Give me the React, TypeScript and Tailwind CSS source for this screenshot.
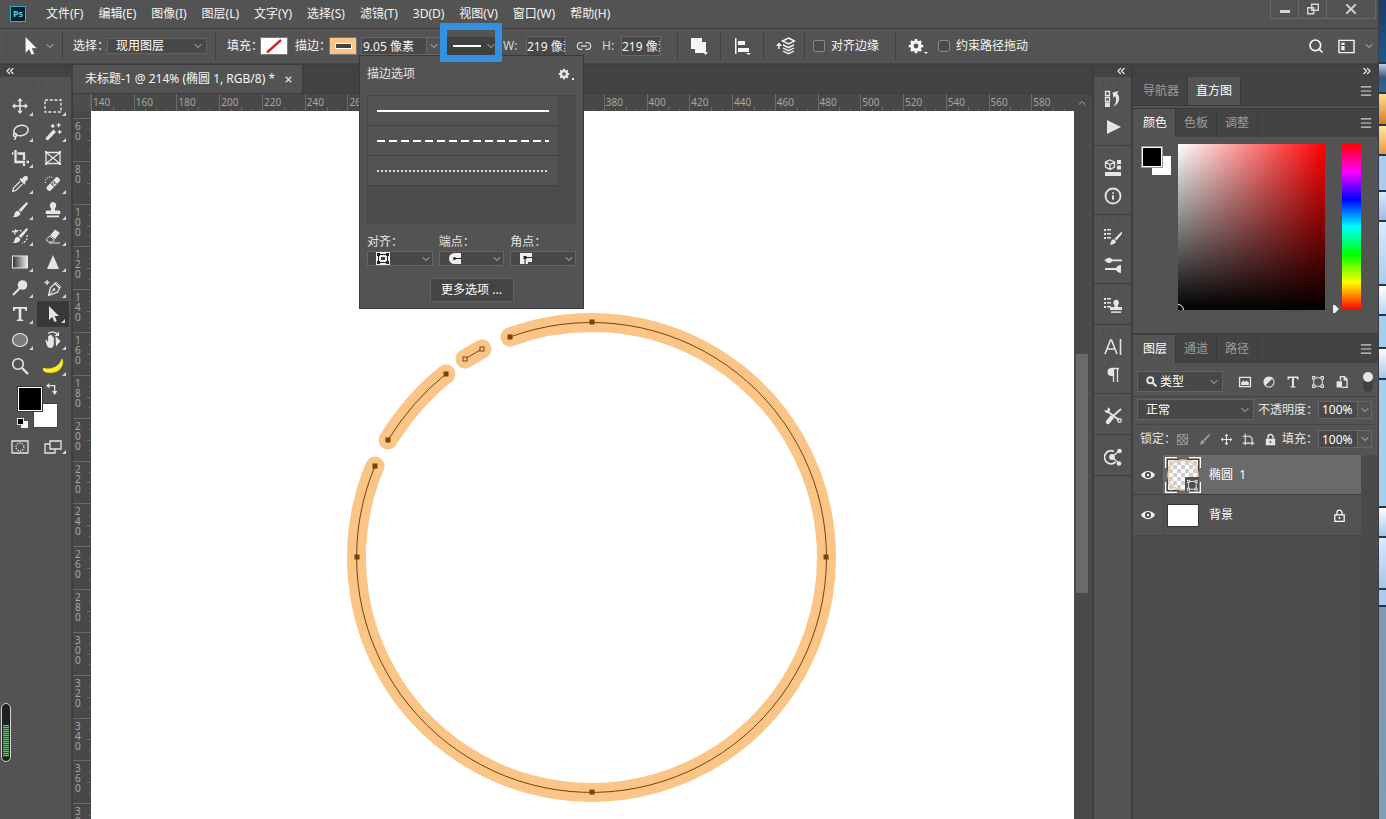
import { ReactNode } from 'react';
import { ChevronDown, ChevronUp, ChevronsLeft, ChevronsRight, Link2, Menu, Search, Info } from 'lucide-react';

const menus = ['文件(F)', '编辑(E)', '图像(I)', '图层(L)', '文字(Y)', '选择(S)', '滤镜(T)', '3D(D)', '视图(V)', '窗口(W)', '帮助(H)'];

const rulerX = Array.from({ length: 23 }, (_, i) => 140 + i * 20);
const rulerY = Array.from({ length: 17 }, (_, i) => 60 + i * 20);

// anchor points of the open path, in canvas pixels
const anchors = [[419, 226], [355, 263], [297, 329], [284, 355], [266, 446], [501, 681], [735, 446], [501, 211]];
const openAnchors = [[391, 238], [374, 248]];

const Icon = ({ children, className = 'size-[18px]' }: { children: ReactNode; className?: string }) => (
  <svg viewBox="0 0 18 18" className={`shrink-0 ${className}`} fill="currentColor" aria-hidden="true">
    {children}
  </svg>
);

const line = { fill: 'none', stroke: 'currentColor', strokeWidth: 1.3 };

const moveShape = <path d="M9 1l2.7 3.2H9.8v4h4V6.3L17 9l-3.2 2.7V9.8h-4v4h1.9L9 17l-2.7-3.2h1.9v-4h-4v1.9L1 9l3.2-2.7v1.9h4v-4H6.3z" />;
const brushShape = (
  <>
    <path d="M16.5 1.5c.6.5.3 1.2-.2 1.9L10 11 7.6 9l7-7c.7-.7 1.4-1 1.9-.5z" />
    <path d="M6.9 9.7l2.4 2.1c.2 2.7-2.3 4.7-7.8 4.2 2-.8 1.7-2 2.2-3.8.5-1.6 1.7-2.5 3.2-2.5z" />
  </>
);
const stampShape = (
  <>
    <path d="M9 1a3.3 3.3 0 0 1 2.8 5C10.8 7.5 10.8 8.5 11 9.5h4c.8 0 1.3.6 1.3 1.3V13H1.7v-2.2c0-.7.5-1.3 1.3-1.3h4c.2-1 .2-2-.8-3.500A3.3 3.3 0 0 1 9 1z" />
    <rect x="3" y="14.5" width="12" height="1.8" />
  </>
);
const gearShape = (
  <path
    fillRule="evenodd"
    d="M7.7 1h2.6l.4 2 1.4.6 1.7-1.1 1.8 1.8-1.1 1.7.6 1.4 2 .4v2.5l-2 .4-.6 1.4 1.1 1.7-1.8 1.8-1.7-1.1-1.4.6-.4 2H7.7l-.4-2-1.4-.6-1.7 1.1-1.8-1.8 1.1-1.7-.6-1.4-2-.4V7.8l2-.4.6-1.4-1.1-1.7 1.8-1.8 1.7 1.1L7.3 3zM9 6.3a2.7 2.7 0 1 0 0 5.4 2.7 2.7 0 0 0 0-5.4z"
  />
);
const typeShape = <path d="M2 2h14v4h-1.4c-.3-1.7-.9-2.3-2.5-2.3h-1.8v9.8c0 1 .4 1.3 2 1.4V16H5.7v-1.1c1.6-.1 2-.4 2-1.4V3.7H5.9C4.3 3.7 3.7 4.3 3.4 6H2z" />;
const pathBoxShape = (
  <g {...line}>
    <path d="M5 3.5h8M5 14.5h8M3.5 5v8M14.5 5v8" />
    <path d="M2 2h3v3H2zM13 2h3v3h-3zM2 13h3v3H2zM13 13h3v3h-3z" />
  </g>
);
const arrowShape = <path d="M5 1v14l3.3-3.1 2.2 5 2.3-1-2.2-4.900H15z" />;

const tools: { label: string; corner?: boolean; active?: boolean; art: ReactNode }[] = [
  { label: '移动工具', corner: true, art: moveShape },
  { label: '矩形选框工具', corner: true, art: <rect x="1" y="3" width="16" height="12" {...line} strokeDasharray="3 1.7" /> },
  {
    label: '套索工具', corner: true,
    art: <g {...line} strokeWidth="1.5"><ellipse cx="10" cy="7.5" rx="7.2" ry="5.2" transform="rotate(-12 10 7.5)" /><circle cx="4" cy="12" r="1.6" /><path d="M4.5 13.5c.5 1.5-.3 2.7-1.5 3" /></g>,
  },
  {
    label: '魔棒工具', corner: true,
    art: <><path d="M2 14.5L9.5 6.5 12 9 4.5 16.8c-1.5 1.3-3.800-.7-2.500-2.300z" /><path d="M8 1h1.4v1.3h1.3v1.4H9.4V5H8V3.7H6.7V2.3H8zM14 0h1.3v1.5h1.4v1.3h-1.4v1.4H14V2.8h-1.4V1.5H14zM15 7h1.3v1.3h1.4v1.3h-1.4V11H15V9.6h-1.3V8.3H15z" /></>,
  },
  { label: '裁剪工具', corner: true, art: <path d="M4.5 1v12H14M1 4.5h1.5M6.5 4.5H13V11M13 14.5V17M15.5 13H18" {...line} strokeWidth="2.3" /> },
  { label: '图框工具', art: <g {...line}><path d="M2 3.5h14v11H2zM2 3.5l14 11M16 3.5l-14 11" /><path d="M1 2h2v2H1zM15 2h2v2h-2zM1 14h2v2H1zM15 14h2v2h-2z" fill="currentColor" stroke="none" /></g> },
  {
    label: '吸管工具', corner: true,
    art: <><path d="M13 1.5c1-1 2.5-.9 3.3 0s1 2.3 0 3.3L13.9 7l.8.9-1.5 1.5-4.8-4.8L9.9 3.1l.9.9z" /><path d="M9 6.5l-6.5 6.6-.8 3.3 3.2-.9 6.6-6.600" {...line} /></>,
  },
  {
    label: '修复画笔工具', corner: true,
    art: <><path d="M12 2.2c1.3-1.3 5 2.3 3.8 3.7L6.5 15.7c-1.5 1.4-5.2-2.2-3.8-3.7z" /><path d="M6.5 8l3.7 3.8M9 5.4l3.7 3.8" stroke="#535353" strokeWidth="1" /><g fill="#535353"><circle cx="8.5" cy="9" r=".7" /><circle cx="10.5" cy="8.8" r=".7" /><circle cx="9" cy="7.3" r=".7" /></g><path d="M1.5 8c-1-4 3-7.500 7-5.500" {...line} strokeDasharray="1 1.5" /></>,
  },
  { label: '画笔工具', corner: true, art: brushShape },
  { label: '仿制图章工具', corner: true, art: stampShape },
  {
    label: '历史记录画笔工具', corner: true,
    art: <>{brushShape}<path d="M1 4.5h4.5L4 2.5M3 4.5l1.5 3" {...line} /><path d="M5.5 4c2-1 4-.8 5 .5M16 8c.8 4-1 7-5 8" {...line} strokeDasharray="2 1.3" /></>,
  },
  {
    label: '橡皮擦工具', corner: true,
    art: <><path d="M11 2.5l4.8 3.6-4.7 6L6.2 8.4z" /><path d="M5.7 9l4.7 3.8-1.9 2.200H4.700L2 12.800z" fill="none" stroke="currentColor" /><path d="M5 16h11" {...line} strokeWidth="1" /></>,
  },
  { label: '渐变工具', corner: true, art: <><defs><linearGradient id="gradTool"><stop offset="0" stopColor="#303030" /><stop offset="1" stopColor="#eee" /></linearGradient></defs><rect x="1.5" y="3" width="15" height="12" fill="url(#gradTool)" stroke="currentColor" /></> },
  { label: '锐化工具', corner: true, art: <path d="M9 2l6 14H3z" /> },
  { label: '减淡工具', corner: true, art: <><circle cx="11.5" cy="6" r="4.8" /><path d="M8.5 9.5L2 16" stroke="currentColor" strokeWidth="2" /></> },
  {
    label: '钢笔工具', corner: true,
    art: <><path d="M11 4.5l4.5 4.5-2 4.2-9 3.3 2-8z" {...line} /><path d="M12 3.2l4.8 4.7-1.2 1.2-4.8-4.7zM5 16l4.5-5" {...line} strokeWidth="1" /><circle cx="10" cy="10.5" r="1.3" /><path d="M3 1v5M.5 3.5h5" {...line} /></>,
  },
  { label: '文字工具', corner: true, art: typeShape },
  { label: '直接选择工具', corner: true, active: true, art: arrowShape },
  { label: '椭圆工具', corner: true, art: <ellipse cx="9" cy="9" rx="7.5" ry="6.5" fill="#7c7c7c" stroke="currentColor" strokeWidth="1.2" /> },
  {
    label: '旋转视图工具', corner: true,
    art: <><path d="M1.5 9.5c0-1 1.2-1 1.6 0l1 2V5.500c0-1 1.400-1 1.400 0v3V4.300c0-1 1.500-1 1.500 0v4V5c0-1 1.500-1 1.500 0v3.500V6.500c0-.8 1.300-.8 1.300 0v6c0 3-1.500 4.500-3.600 4.500-2.700 0-3.700-3-4.700-7.500z" /><path d="M11.5 5l5 5-4.5 5.5z" /><path d="M4 2.5c3-2 7-1.7 9 .3" {...line} /><path d="M15 .5v4.500h-4.500z" /></>,
  },
  { label: '缩放工具', art: <><circle cx="7" cy="7" r="5.3" {...line} strokeWidth="1.6" /><path d="M11 11l6 6" stroke="currentColor" strokeWidth="2.4" /></> },
  { label: '香蕉', corner: true, art: null },
];

const Chevron = () => <ChevronDown className="size-3 shrink-0 text-neutral-300" strokeWidth={1.7} />;

const Corner = () => <span className="absolute bottom-[3px] right-[3px] border-b-4 border-l-4 border-b-neutral-300 border-l-transparent" />;

const Grip = () => <div className="mx-auto h-1 w-5 bg-[repeating-linear-gradient(90deg,#484848_0_1px,#5a5a5a_1px_2px)]" />;

const Divider = () => <div className="h-7 w-px shrink-0 bg-[#404040]" />;

const Dropdown = ({ label, value, className }: { label: string; value: string; className: string }) => (
  <div className={`relative flex items-center border border-[#636363] bg-[#484848] ${className}`}>
    <select aria-label={label} className="size-full appearance-none bg-transparent pl-2 text-xs leading-none text-white outline-none">
      <option>{value}</option>
    </select>
    <span className="pointer-events-none absolute right-0.5">
      <Chevron />
    </span>
  </div>
);

const IconDropdown = ({ label, children }: { label: string; children: ReactNode }) => (
  <label className="flex flex-1 flex-col">
    <span className="text-xs leading-4 text-neutral-200">{label}：</span>
    <span className="relative mt-px flex h-[15px] items-center border border-[#666] bg-[#484848] pl-2">
      {children}
      <select className="absolute inset-0 size-full appearance-none bg-transparent text-transparent outline-none">
        <option>{label}</option>
      </select>
      <span className="pointer-events-none absolute right-0">
        <Chevron />
      </span>
    </span>
  </label>
);

const PercentField = ({ label }: { label: string }) => (
  <div className="ml-auto mr-1.5 flex items-center">
    <label className="flex items-center text-xs text-neutral-200">
      <span className="whitespace-nowrap">{label}：</span>
      <input defaultValue="100%" className="h-[18px] w-10 border border-[#666] bg-[#484848] pl-[3px] text-xs text-white outline-none" />
    </label>
    <button aria-label={label} className="flex h-[18px] w-[14px] items-center justify-center border border-l-0 border-[#666]">
      <Chevron />
    </button>
  </div>
);

const TabRow = ({ tabs, active }: { tabs: string[]; active: number }) => (
  <div className="flex h-7 shrink-0 items-stretch bg-[#434343]">
    {tabs.map((tab, i) => (
      <button
        key={tab}
        className={`border-r border-[#3a3a3a] px-2 text-xs first:pl-2.5 ${i === active ? 'bg-[#535353] text-white' : 'text-[#9c9c9c]'}`}
      >
        {tab}
      </button>
    ))}
    <button aria-label="面板菜单" className="ml-auto mr-[5px] text-neutral-300">
      <Menu className="size-[14px]" strokeWidth={2} />
    </button>
  </div>
);

const MenuBar = () => (
  <header className="flex h-7 shrink-0 items-center bg-[#535353] pl-2.5 text-neutral-100">
    <div className="flex size-4 items-center justify-center border border-[#2cb5c8] bg-[#04202b] text-[9px] font-bold text-[#4dd0e8]">Ps</div>
    <nav className="ml-5 flex gap-[15px]">
      {menus.map((m) => (
        <button key={m} className="whitespace-nowrap text-xs leading-6">{m}</button>
      ))}
    </nav>
    <div className="ml-auto mr-0.5 flex h-[19px] self-start border border-t-0 border-[#686868] text-neutral-300">
      <button aria-label="最小化" className="flex w-7 items-center justify-center border-r border-[#686868] pt-1">
        <span className="h-[3px] w-2.5 bg-neutral-300" />
      </button>
      <button aria-label="还原" className="flex w-7 items-center justify-center border-r border-[#686868]">
        <Icon className="size-3"><path d="M7 2h10v9H7zM1 7h9v9H1z" {...line} strokeWidth="2.2" /></Icon>
      </button>
      <button aria-label="关闭" className="flex w-12 items-center justify-center">
        <Icon className="size-3"><path d="M2 2l14 14M16 2L2 16" {...line} strokeWidth="3" /></Icon>
      </button>
    </div>
  </header>
);

const StrokePopup = () => (
  <div className="absolute -left-0.5 top-full z-10 flex h-[254px] w-[225px] flex-col border border-[#3a3a3a] bg-[#535353] px-[7px] pb-1.5 text-neutral-200">
    <div className="flex h-[39px] items-center justify-between pb-1 pr-0.5 text-xs">
      <span>描边选项</span>
      <button aria-label="描边设置" className="flex items-end">
        <Icon className="size-3">{gearShape}</Icon>
        <span className="ml-0.5 size-0.5 bg-neutral-200" />
      </button>
    </div>
    <div className="flex h-[129px] border-t border-[#464646] bg-[#4b4b4b]">
      <ul className="w-[192px] border-x border-[#494949]">
        {['实线', '虚线', '点线'].map((name, i) => (
          <li key={name} className="h-[30px] border-b border-[#424242] bg-[#535353]">
            <button aria-label={name} className="flex size-full items-center px-[9px]">
              {i === 0 && <span className="h-0.5 w-full bg-white" />}
              {i === 1 && <span className="h-0.5 w-full bg-[repeating-linear-gradient(90deg,#fff_0_8px,transparent_8px_12px)]" />}
              {i === 2 && <span className="h-0.5 w-full bg-[repeating-linear-gradient(90deg,#ddd_0_2px,transparent_2px_4px)]" />}
            </button>
          </li>
        ))}
      </ul>
    </div>
    <div className="mt-2.5 flex gap-1.5">
      <IconDropdown label="对齐">
        <svg viewBox="0 0 14 13" className="h-[13px] w-[14px]">
          <path fill="#eee" d="M0 0h14v13H0z" />
          <path d="M2.5 2.5h9v8h-9z" fill="none" stroke="#222" />
          <path d="M1 1h3v3H1zM10 1h3v3h-3zM1 9h3v3H1zM10 9h3v3h-3z" fill="#222" />
          <path d="M5 5h4v3H5z" fill="#444" />
        </svg>
      </IconDropdown>
      <IconDropdown label="端点">
        <svg viewBox="0 0 14 13" className="h-[13px] w-[14px]">
          <path fill="#eee" d="M13 1v11H6.500a5.500 5.500 0 0 1 0-11z" />
          <path d="M7 6.5h6" stroke="#222" />
          <circle cx="6.5" cy="6.5" r="1.5" fill="#222" />
        </svg>
      </IconDropdown>
      <IconDropdown label="角点">
        <svg viewBox="0 0 14 13" className="h-[13px] w-[14px]">
          <path fill="#eee" d="M1 1h12v9H9v2H1z" />
          <path d="M6 12V5.500h7" fill="none" stroke="#222" />
          <path fill="#222" d="M4.500 4h3v3h-3z" />
        </svg>
      </IconDropdown>
    </div>
    <button className="mx-auto mt-3 h-6 w-[84px] border border-[#636363] bg-[#444] text-xs text-white">更多选项 ...</button>
  </div>
);

const OptionsBar = () => (
  <div className="flex h-9 shrink-0 items-center border-y border-t-[#3c3c3c] border-b-[#464646] bg-[#535353] text-xs text-neutral-100">
    <div className="ml-1 h-7 w-1 bg-[repeating-linear-gradient(#484848_0_1px,#5a5a5a_1px_2px)]" />
    <button aria-label="当前工具" className="ml-3 flex items-center gap-1">
      <Icon className="size-5">{arrowShape}</Icon>
      <Chevron />
    </button>
    <div className="ml-1.5 mr-2.5"><Divider /></div>
    <span className="w-[34px] whitespace-nowrap">选择：</span>
    <Dropdown label="选择" value="现用图层" className="h-4 w-[100px]" />
    <div className="ml-2 mr-[11px]"><Divider /></div>
    <span className="w-[33px] whitespace-nowrap">填充：</span>
    <button aria-label="填充颜色" className="h-[18px] w-7 border border-[#777] bg-white">
      <svg viewBox="0 0 26 16" className="size-full"><path d="M6 14.5L20 2" stroke="#c4282d" strokeWidth="2.4" /></svg>
    </button>
    <span className="ml-[7px] w-[34px] whitespace-nowrap">描边：</span>
    <button aria-label="描边颜色" className="flex h-[18px] w-7 items-center justify-center border border-[#777] bg-[#fac586]">
      <span className="h-1.5 w-[17px] border border-white bg-[#444]" />
    </button>
    <div className="relative ml-1 flex h-[18px] w-[136px] items-center">
      <input aria-label="描边宽度" defaultValue="9.05 像素" className="h-[18px] w-[66px] border border-[#666] bg-[#484848] pl-px outline-none" />
      <button aria-label="宽度" className="flex h-[18px] w-[14px] items-center justify-center border border-l-0 border-[#666]"><Chevron /></button>
      <button aria-label="描边类型" className="ml-1.5 flex h-[18px] w-[50px] items-center justify-between bg-[#404040] pl-1.5">
        <span className="h-0.5 w-7 bg-white" />
        <Chevron />
      </button>
      <StrokePopup />
      <div className="pointer-events-none absolute -top-3.5 left-[79px] z-20 h-[39px] w-[62px] border-[7px] border-[#3391e2]" />
    </div>
    <label className="ml-1.5 flex items-center">
      <span className="w-[23px] text-neutral-300">W:</span>
      <input defaultValue="219 像素" className="h-5 w-10 border border-[#666] bg-[#484848] outline-none" />
    </label>
    <Link2 className="mx-2.5 size-4 text-neutral-300" strokeWidth={2} />
    <label className="flex items-center">
      <span className="w-[19px] text-neutral-300">H:</span>
      <input defaultValue="219 像素" className="h-5 w-10 border border-[#666] bg-[#484848] outline-none" />
    </label>
    <div className="ml-4 mr-3"><Divider /></div>
    <button aria-label="路径操作">
      <Icon><path d="M1 1h11v4h4v11H5v-4H1z" /><path d="M13 15h5l-2.500 3z" fill="#fff" /></Icon>
    </button>
    <div className="mx-3"><Divider /></div>
    <button aria-label="路径对齐方式">
      <Icon><path d="M2 1h1.500v16H2zM5 4h7v4H5zM5 11h11v4H5zM13 16h5l-2.500 2z" /></Icon>
    </button>
    <div className="mx-3"><Divider /></div>
    <button aria-label="路径排列方式">
      <svg viewBox="0 0 20 18" className="h-[18px] w-5" fill="currentColor">
        <path d="M12.500 1l6 3-6 3-6-3z" {...line} strokeWidth="1.500" />
        <path d="M7 7l5.500 2.700L18 7v1.700l-5.500 2.800L7 8.700z" />
        <path d="M7 11l5.500 2.700L18 11M7 14l5.500 2.700L18 14" {...line} />
        <path d="M3 5.500L6 9H3.700v3H2.300V9H0z" />
      </svg>
    </button>
    <div className="mx-2"><Divider /></div>
    <label className="flex items-center gap-1.5 whitespace-nowrap">
      <input type="checkbox" className="size-3 appearance-none rounded-xs border border-[#888] bg-[#4b4b4b]" />
      对齐边缘
    </label>
    <div className="ml-4 mr-3"><Divider /></div>
    <button aria-label="设置其他钢笔选项" className="flex items-end">
      <Icon className="size-4">{gearShape}</Icon>
      <span className="border-x-2 border-t-2 border-x-transparent border-t-neutral-100" />
    </button>
    <label className="ml-2.5 flex items-center gap-1.5 whitespace-nowrap">
      <input type="checkbox" className="size-3 appearance-none rounded-xs border border-[#888] bg-[#4b4b4b]" />
      约束路径拖动
    </label>
    <button aria-label="搜索" className="ml-auto"><Search className="size-4" strokeWidth={2.5} /></button>
    <button aria-label="工作区" className="ml-3.5 flex items-center gap-2">
      <Icon className="size-[17px]"><path d="M1 2.500h16v13H1z" {...line} strokeWidth="1.500" /><path d="M3.500 5H7v2.500H3.500zM3.500 8.500H7V13H3.500z" /></Icon>
      <Chevron />
    </button>
    <span className="w-[3px]" />
  </div>
);

const Toolbar = () => (
  <aside className="relative flex w-[73px] shrink-0 flex-col border-r-2 border-[#3e3e3e] bg-[#535353] text-neutral-200">
    <div className="flex h-3 items-center bg-[#424242] pl-1"><ChevronsLeft className="size-3" strokeWidth={2.5} /></div>
    <div className="pt-1"><Grip /></div>
    <div className="mt-2 grid grid-cols-2 gap-x-px pl-1 pr-[2px]">
      {tools.map((t) => (
        <button
          key={t.label}
          aria-label={t.label}
          className={`relative flex h-[26px] items-center justify-center ${t.active ? 'border border-[#3a3a3a] bg-[#383838]' : ''}`}
        >
          {t.art ? (
            <Icon>{t.art}</Icon>
          ) : (
            <svg viewBox="0 0 22 16" className="h-4 w-[22px]">
              <path d="M19.500 1l1.300.2C22 8 18 14.500 9 15c-4 .2-7.500-1-8.200-3.300L1.200 9.500C5 11.500 13 11 17.500 5c1-1.500 1.500-2.500 2-4z" fill="#ffe600" />
              <path d="M2.500 11.500c7 2 13 0 16.500-6" fill="none" stroke="#fff59a" />
            </svg>
          )}
          {t.corner && <Corner />}
        </button>
      ))}
    </div>
    <div className="relative ml-[18px] mt-2 h-11 w-10">
      <button aria-label="背景色" className="absolute left-[15px] top-4 size-[25px] border border-[#444] bg-white" />
      <button aria-label="前景色" className="absolute left-0 top-0 size-6 border border-white bg-black outline outline-[#333]" />
      <button aria-label="切换前景色和背景色" className="absolute -top-1 right-0">
        <Icon className="size-3"><path d="M5 4h8v9" {...line} strokeWidth="2" /><path d="M0 4l5-4v8zM9 12h8l-4 6z" /></Icon>
      </button>
      <span className="absolute left-[3px] top-[34px] size-[7px] bg-neutral-100" />
      <span className="absolute -left-px top-[31px] size-[7px] border border-neutral-200 bg-black" />
    </div>
    <div className="mt-1.5 grid grid-cols-2 gap-x-px pl-1 pr-[2px]">
      <button aria-label="快速蒙版" className="relative flex h-5 items-center justify-center">
        <Icon><path d="M1 3h16v12H1z" {...line} /><circle cx="9" cy="9" r="4" {...line} strokeDasharray="1.300 1.200" /></Icon>
      </button>
      <button aria-label="屏幕模式" className="relative flex h-5 items-center justify-center">
        <Icon><path d="M1 6h10v9H1z" {...line} /><path d="M6 3h11v8H6z" fill="#535353" stroke="currentColor" strokeWidth="1.300" /></Icon>
        <Corner />
      </button>
    </div>
    <div className="absolute left-px top-[638px] flex h-[59px] w-[10px] items-end rounded-md border border-neutral-300 bg-[#202020] px-px pb-1">
      <span className="h-8 w-full bg-[repeating-linear-gradient(#58cf62_0_1px,#205b29_1px_2px)]" />
    </div>
  </aside>
);

const Document = () => (
  <main className="flex min-w-0 flex-1 flex-col bg-[#484848]">
    <div className="flex h-7 shrink-0 bg-[#424242]">
      <div className="flex items-center gap-2 border-r border-[#3a3a3a] bg-[#535353] pl-3 pr-2.5 text-xs text-neutral-100">
        <span className="w-48 whitespace-nowrap">未标题-1 @ 214% (椭圆 1, RGB/8) *</span>
        <button aria-label="关闭文档" className="text-neutral-300"><Icon className="size-[7px]"><path d="M2 2l14 14M16 2L2 16" {...line} strokeWidth="4" /></Icon></button>
      </div>
    </div>
    <div className="flex h-[18px] shrink-0 border-t border-[#3c3c3c] text-[10px] text-[#a5a5a5]">
      <div className="w-[18px] shrink-0 border-r border-[#5a5a5a] bg-[#4d4d4d]" />
      <div className="grid flex-1 grid-cols-23">
        {rulerX.map((n) => (
          <div key={n} className="relative border-l border-[#6a6a6a] pl-px leading-4">
            {n}
            <div className="absolute inset-x-0 bottom-0 grid h-1 grid-cols-4 items-end">
              <i />
              <i className="h-0.5 border-l border-[#6a6a6a]" />
              <i className="h-1 border-l border-[#6a6a6a]" />
              <i className="h-0.5 border-l border-[#6a6a6a]" />
            </div>
          </div>
        ))}
      </div>
      <div className="flex w-[18px] shrink-0 items-center pl-0.5"><ChevronUp className="size-3" /></div>
    </div>
    <div className="flex min-h-0 flex-1">
      <div className="w-[18px] shrink-0 overflow-hidden pt-[7px] text-[10px] text-[#a5a5a5]">
        <div className="grid h-[728px] grid-rows-17">
          {rulerY.map((n) => (
            <div key={n} className="relative border-t border-[#6a6a6a] pl-0.5 pt-0.5">
              <p className="w-[7px] break-all leading-[10px]">{n}</p>
              <div className="absolute inset-y-0 right-0 grid w-1 grid-rows-4 justify-items-end">
                <i />
                <i className="w-0.5 border-t border-[#6a6a6a]" />
                <i className="w-1 border-t border-[#6a6a6a]" />
                <i className="w-0.5 border-t border-[#6a6a6a]" />
              </div>
            </div>
          ))}
        </div>
      </div>
      <div className="min-w-0 flex-1 bg-white">
        <svg className="size-full" aria-label="椭圆 1">
          {[['#fac586', 19], ['#7a4109', 1]].map(([color, width]) => (
            <g key={color} fill="none" stroke={String(color)} strokeWidth={width} strokeLinecap="round">
              <path d="M419 226A235 235 0 1 1 284 355" />
              <path d="M391 238L374 248" />
              <path d="M297 329Q322 289 355 263" />
            </g>
          ))}
          {anchors.map(([x, y]) => <rect key={`${x}-${y}`} x={x - 2.5} y={y - 2.5} width="5" height="5" fill="#7a4109" />)}
          {openAnchors.map(([x, y]) => <rect key={x} x={x - 2} y={y - 2} width="4" height="4" fill="#fac586" stroke="#7a4109" />)}
        </svg>
      </div>
      <div className="w-[18px] shrink-0 bg-[#4a4a4a] pl-0.5 pt-[243px]">
        <div className="h-[239px] w-3 bg-[#6a6a6a]" />
      </div>
    </div>
  </main>
);

const listMarks = <path d="M0 1h2v2H0zM3 1h4v1.500H3zM0 5h2v2H0zM3 5h4v1.500H3zM0 9h2v2H0zM3 9h4v1.500H3z" />;

const dock: { label: string; art: ReactNode }[][] = [
  [
    { label: '历史记录', art: <><path d="M1.500 1.500h4v4h-4zM1.500 7.500h4v4h-4z" {...line} /><path d="M1 12.500h5V17H1z" /><path d="M8.500 2.500L15 1l-2 2.200c4 4.300 2.500 10-3.500 13.300 3-4 3.300-7.500 1.500-10.500L9.500 8z" /></> },
    { label: '动作', art: <path d="M3 2l14 7-14 7z" /> },
  ],
  [
    { label: '库', art: <><path d="M6 1l4.500 2v5L6 10.500 1.500 8V3zM1.500 3L6 5.500 10.500 3M6 5.500v5" {...line} /><path d="M13 1h4v4h-4zM13 6.500h4v4h-4zM1 13h16v4H1z" /></> },
    { label: '信息', art: null },
  ],
  [
    { label: '画笔设置', art: <>{listMarks}<g transform="translate(4 3) scale(.85)">{brushShape}</g></> },
    { label: '画笔', art: <><path d="M0 4c3 0 3-3 6-2 2 .5 2 1.300 2 1.500h10v1.800H8C8 6 7 7 5 7S2 5 0 4zM1 12h11c1-2 3-3 5-3v8c-2 0-4-1-5-3H1z" /></> },
  ],
  [{ label: '仿制源', art: <>{listMarks}<g transform="translate(4.500 2) scale(.85)">{stampShape}</g></> }],
  [
    { label: '字符', art: <path d="M1 16L6.500 2h1L13 16M3.200 11h8M16.500 1v16" {...line} strokeWidth="1.600" /> },
    { label: '段落', art: <><path d="M9 2v8H7.500a4 4 0 0 1 0-8z" /><path d="M9.500 2v14M13.500 2v14M7 2.500h8" {...line} /></> },
  ],
  [{ label: '工具预设', art: <><path d="M3 4l12 9" stroke="currentColor" strokeWidth="1.800" /><path d="M.5 3l2 .8L4 2 3.500.5c2 0 3 1.500 2.500 3L4.500 6C2.500 6.500.5 5 .5 3z" /><circle cx="15.500" cy="13.500" r="1.800" {...line} /><path d="M17 2L8.500 9.500" stroke="currentColor" strokeWidth="1.800" /><path d="M7 8l3 3-5 6c-1.500 1-4-1-3-3z" /></> }],
  [{ label: '路径关联', art: <><path d="M11.500 14A6.500 6.500 0 1 1 10 3.500" {...line} strokeWidth="1.800" /><path d="M8 9l7-6M8 9l6.500 6" {...line} /><circle cx="8" cy="9" r="2.900" /><circle cx="15.500" cy="3" r="2.300" /><circle cx="15" cy="15.500" r="2.300" /></> }],
];

const Dock = () => (
  <aside className="flex w-[41px] shrink-0 flex-col border-x-2 border-[#3e3e3e] bg-[#535353] text-neutral-200">
    <div className="flex h-3 items-center justify-end bg-[#424242] pr-1"><ChevronsLeft className="size-3" strokeWidth={2.5} /></div>
    {dock.map((group, i) => (
      <div key={i} className="border-b border-[#3e3e3e] py-1">
        <Grip />
        {group.map((d) => (
          <button key={d.label} aria-label={d.label} className="flex h-7 w-full items-center justify-center">
            {d.art ? <Icon>{d.art}</Icon> : <Info className="size-[18px]" strokeWidth={2.5} />}
          </button>
        ))}
      </div>
    ))}
  </aside>
);

const ColorPanel = () => (
  <section className="flex h-[196px] shrink-0 px-[9px] pt-[7px]">
    <div className="relative h-8 w-9 shrink-0">
      <button aria-label="背景色" className="absolute left-2.5 top-3 size-[19px] bg-white" />
      <button aria-label="前景色" className="absolute left-0 top-[3px] size-5 border border-white bg-black outline outline-[#999]" />
    </div>
    <div className="relative h-[166px] flex-1 overflow-hidden bg-[linear-gradient(to_top,#000,transparent),linear-gradient(to_right,#fff,#f00)]">
      <span className="absolute -bottom-1.5 -left-1.5 size-3 rounded-full border border-white" />
    </div>
    <div className="relative ml-[17px] mr-2 h-[166px] w-[19px] bg-[linear-gradient(#f00,#f0f,#00f,#0ff,#0f0,#ff0,#f00)]">
      <svg viewBox="0 0 8 10" className="absolute -bottom-1 -left-2.5 h-2.5 w-2"><path d="M1 1h2l4 4-4 4H1z" fill="#eee" /></svg>
    </div>
  </section>
);

const Eye = () => (
  <button aria-label="可见性" className="flex w-[30px] shrink-0 items-center justify-center">
    <svg viewBox="0 0 14 10" className="h-2.5 w-3.5">
      <path d="M0 5C3-.5 11-.5 14 5 11 10.500 3 10.500 0 5z" fill="#eee" />
      <circle cx="7" cy="5" r="3" fill="#444" />
      <circle cx="7" cy="5" r="1.300" fill="#eee" />
    </svg>
  </button>
);

const filters: ReactNode[] = [
  <><path d="M2 3h14v12H2z" {...line} strokeWidth="1.700" /><path d="M4 13V10l3-3 2 2 2-2 3 3v3z" /></>,
  <><circle cx="9" cy="9" r="6.500" {...line} /><path d="M13.600 4.400A6.500 6.500 0 0 0 4.400 13.600z" /></>,
  typeShape,
  pathBoxShape,
  <><path d="M7 7V2h5l3.500 3.500V16H9" {...line} strokeWidth="1.700" /><path d="M2 8h7v8H2zM11 2v5h5z" /></>,
];

const locks: ReactNode[] = [
  <><path d="M2 2h14v14H2z" {...line} /><path d="M3 3h3v3H3zM9 3h3v3H9zM6 6h3v3H6zM12 6h3v3h-3zM3 9h3v3H3zM9 9h3v3H9zM6 12h3v3H6zM12 12h3v3h-3z" /></>,
  brushShape,
  moveShape,
  <path d="M4.500 1v16M1 4.500h10l3 3v6M1 14h16M14 8v9" {...line} strokeWidth="1.600" />,
];

const LayersPanel = () => (
  <section className="flex flex-1 flex-col text-neutral-200">
    <div className="flex h-[34px] items-center border-b border-[#414141] pl-1 pt-1">
      <div className="relative flex h-[21px] w-[86px] items-center border border-[#636363] bg-[#484848] pl-2">
        <Icon className="size-[11px]"><circle cx="7" cy="7" r="5" {...line} strokeWidth="3" /><path d="M11 11l6 6" stroke="currentColor" strokeWidth="3.500" /></Icon>
        <select aria-label="图层筛选" className="absolute inset-0 size-full appearance-none bg-transparent pl-[22px] text-xs text-white outline-none">
          <option>类型</option>
        </select>
        <span className="pointer-events-none absolute right-0.5"><Chevron /></span>
      </div>
      <div className="flex flex-1 items-center justify-between pl-[15px] pr-[5px]">
        {filters.map((art, i) => (
          <button key={i} aria-label="筛选"><Icon className="size-[14px]">{art}</Icon></button>
        ))}
        <button aria-label="打开或关闭图层过滤" className="ml-1 flex h-5 w-2.5 items-start rounded-full bg-[#404040]">
          <span className="size-2.5 rounded-full bg-neutral-200" />
        </button>
      </div>
    </div>
    <div className="flex h-7 items-center border-b border-[#474747] pb-0.5 pl-1">
      <Dropdown label="混合模式" value="正常" className="h-[21px] w-[117px]" />
      <PercentField label="不透明度" />
    </div>
    <div className="flex h-[30px] items-center pb-0.5 pl-[7px]">
      <span className="w-[36px] whitespace-nowrap text-xs">锁定：</span>
      <div className="flex items-center gap-[9px]">
        {locks.map((art, i) => (
          <button key={i} aria-label="锁定选项" className={i < 2 ? 'text-[#999]' : ''}><Icon className="size-[13px]">{art}</Icon></button>
        ))}
        <button aria-label="锁定全部"><Icon className="size-[13px]"><path d="M2.500 8h13v9h-13z" /><path d="M5.500 8V5.500a3.500 3.500 0 0 1 7 0V8" {...line} strokeWidth="2" /><path d="M8 11h2v3H8z" fill="#535353" /></Icon></button>
      </div>
      <PercentField label="填充" />
    </div>
    <div className="flex flex-1 bg-[#4d4d4d]">
      <ul className="flex flex-1 flex-col text-xs text-white">
        <li className="flex h-10 border-b border-[#414141] bg-[#535353]">
          <Eye />
          <div className="flex flex-1 items-center bg-[#6a6a6a] pl-0.5">
            <svg viewBox="0 0 36 36" className="size-9">
              <defs>
                <pattern id="checker" width="8" height="8" patternUnits="userSpaceOnUse">
                  <path fill="#fff" d="M0 0h8v8H0z" />
                  <path fill="#ccc" d="M0 0h4v4H0zM4 4h4v4H4z" />
                </pattern>
              </defs>
              <path d="M2 2h32v32H2z" fill="#444" />
              <path d="M3 3h30v30H3z" fill="url(#checker)" />
              <circle cx="18" cy="18" r="15" fill="none" stroke="#f4c9a0" strokeWidth="1.500" />
              <path d="M.5 11V.5H12M24 .5h11.500V11M35.500 25v10.500H24M12 35.500H.5V25" fill="none" stroke="#fff" strokeWidth="1.500" />
              <path d="M20 20h14v14H20z" fill="#505050" />
              <g transform="translate(21 22) scale(.7)" color="#eee">{pathBoxShape}</g>
            </svg>
            <span className="ml-2">椭圆&nbsp; 1</span>
          </div>
        </li>
        <li className="flex h-[41px] border-b border-[#474747] bg-[#535353]">
          <Eye />
          <div className="flex flex-1 items-center border-l border-[#494949] pl-[3px]">
            <span className="h-[23px] w-8 border border-[#333] bg-white" />
            <span className="ml-2.5">背景</span>
            <Icon className="ml-auto mr-[15px] size-[13px]"><path d="M2.500 8h13v9h-13zM5.500 8V5a3.500 3.500 0 0 1 7 0v3" {...line} strokeWidth="1.700" /><path d="M8 11h2v3H8z" /></Icon>
          </div>
        </li>
      </ul>
      <div className="w-[17px] bg-[#4a4a4a]" />
    </div>
  </section>
);

const Panels = () => (
  <aside className="flex w-[245px] shrink-0 flex-col bg-[#535353]">
    <div className="flex h-3 shrink-0 items-center justify-end bg-[#424242] pr-[5px] text-neutral-200"><ChevronsRight className="size-3" strokeWidth={2.5} /></div>
    <TabRow tabs={['导航器', '直方图']} active={1} />
    <div className="h-1 shrink-0 border-y border-[#3a3a3a] bg-[#535353]" />
    <TabRow tabs={['颜色', '色板', '调整']} active={0} />
    <ColorPanel />
    <div className="h-0.5 shrink-0 bg-[#3e3e3e]" />
    <TabRow tabs={['图层', '通道', '路径']} active={0} />
    <LayersPanel />
  </aside>
);

// sliver of the desktop showing past the window edge
const Desktop = () => (
  <div className="flex w-2 shrink-0 flex-col gap-0.5 border-l border-[#3b3b48] bg-[#24364d]">
    <div className="h-[62px] bg-linear-to-b from-[#1c3c64] to-[#1d5c88]" />
    <div className="h-7 bg-linear-to-b from-[#c3cddc] via-[#31577f] to-[#2d6796]" />
    <div className="h-[30px] bg-linear-to-b from-[#fbe08c] to-[#d97a1e]" />
    <div className="h-7 bg-linear-to-b from-[#fbe9a0] to-[#f0943a]" />
    <div className="h-[34px] bg-[#a9cbee]" />
    <div className="h-[28px] bg-linear-to-b from-[#dbe9fb] to-[#9cbbe6]" />
    <div className="h-[62px] bg-linear-to-b from-[#dbe9fb] to-[#a4cdf2]" />
    <div className="h-[28px] bg-linear-to-b from-white to-[#b7d6f4]" />
    <div className="h-[31px] bg-[#a4cdf2]" />
    <div className="h-[29px] bg-linear-to-b from-white to-[#a4c6ea]" />
    <div className="h-[126px] bg-[#a4cdf2]" />
    <div className="h-[28px] bg-linear-to-b from-white to-[#a4c6ea]" />
    <div className="h-[50px] bg-linear-to-b from-[#dbe9fb] to-[#a4c6ea]" />
    <div className="h-[15px] bg-[#a9cbee]" />
    <div className="flex-1 bg-linear-to-b from-[#8099b0] to-[#7f9db3]" />
  </div>
);

const App = () => (
  <div className="flex h-screen overflow-hidden bg-[#535353] font-['Noto_Sans','Noto_Sans_CJK_SC',sans-serif]">
    <div className="flex min-w-0 flex-1 flex-col">
      <MenuBar />
      <OptionsBar />
      <div className="flex min-h-0 flex-1 border-t border-[#3c3c3c]">
        <Toolbar />
        <Document />
        <Dock />
        <Panels />
      </div>
    </div>
    <Desktop />
  </div>
);

export default App;
